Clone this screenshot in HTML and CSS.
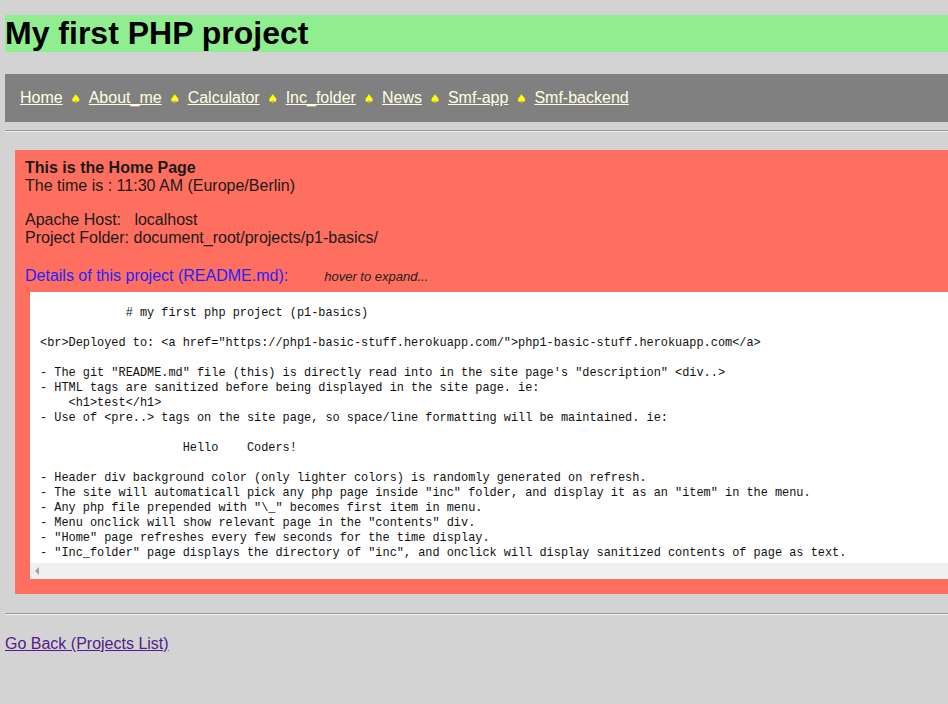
FILE: index.html
```html
<!DOCTYPE html>
<html lang="en">
<head>
<meta charset="utf-8">
<title>My first PHP project</title>
<link rel="stylesheet" href="styles.css">
</head>
<body>
<h1 class="title">My first PHP project</h1>
<nav class="menu">
  <a class="menu-link" href="#">Home</a><span class="sep">♠</span>
  <a class="menu-link" href="#">About_me</a><span class="sep">♠</span>
  <a class="menu-link" href="#">Calculator</a><span class="sep">♠</span>
  <a class="menu-link" href="#">Inc_folder</a><span class="sep">♠</span>
  <a class="menu-link" href="#">News</a><span class="sep">♠</span>
  <a class="menu-link" href="#">Smf-app</a><span class="sep">♠</span>
  <a class="menu-link" href="#">Smf-backend</a>
</nav>
<hr class="rule">
<main class="content">
  <p class="block"><b>This is the Home Page</b><br>The time is : 11:30 AM (Europe/Berlin)</p>
  <p class="block host">Apache Host:&nbsp;&nbsp; localhost<br>Project Folder: document_root/projects/p1-basics/</p>
  <p class="details"><span class="details-label">Details of this project (README.md):</span><span class="hint">hover to expand...</span></p>
  <div class="readme">
<pre class="readme-text">            # my first php project (p1-basics)

&lt;br&gt;Deployed to: &lt;a href="https://php1-basic-stuff.herokuapp.com/"&gt;php1-basic-stuff.herokuapp.com&lt;/a&gt;

- The git "README.md" file (this) is directly read into in the site page's "description" &lt;div..&gt;
- HTML tags are sanitized before being displayed in the site page. ie:
    &lt;h1&gt;test&lt;/h1&gt;
- Use of &lt;pre..&gt; tags on the site page, so space/line formatting will be maintained. ie:

                    Hello    Coders!

- Header div background color (only lighter colors) is randomly generated on refresh.
- The site will automaticall pick any php page inside "inc" folder, and display it as an "item" in the menu.
- Any php file prepended with "\_" becomes first item in menu.
- Menu onclick will show relevant page in the "contents" div.
- "Home" page refreshes every few seconds for the time display.
- "Inc_folder" page displays the directory of "inc", and onclick will display sanitized contents of page as text.</pre>
    <div class="hscroll"><span class="hscroll-arrow"></span></div>
  </div>
</main>
<hr class="rule rule-bottom">
<a class="back" href="#">Go Back (Projects List)</a>
</body>
</html>
```

FILE: styles.css
```css
html {
  background: #d3d3d3;
  overflow: hidden;
}

body {
  margin: 0 0 0 5px;
  font-family: "Liberation Sans", Arial, sans-serif;
  font-size: 16px;
  line-height: 18px;
  color: #000;
}

.title {
  margin: 15px 0 0;
  background: #90ee90;
  font-size: 32px;
  line-height: 37px;
  font-weight: bold;
}

.menu {
  margin-top: 22px;
  background: #808080;
  padding: 15px 15px 15px;
  display: flex;
  align-items: center;
  gap: 9px;
}

.menu-link {
  color: #ffffe0;
  text-decoration: underline;
}

.sep {
  display: flex;
  justify-content: center;
  width: 8px;
  color: #ffff00;
  font-family: "DejaVu Sans", sans-serif;
  font-size: 12px;
  line-height: 18px;
  position: relative;
  top: 1px;
}

.rule {
  margin: 8px 0;
  border: 0;
  border-top: 1px solid #9a9a9a;
  border-bottom: 1px solid #eeeeee;
  height: 0;
}

.content {
  margin: 18px 0 19px 10px;
  background: #ff6f60;
  padding: 9px 0 15px 10px;
  color: #1a1a1a;
}

.block {
  margin: 0 0 16px;
}

.host {
  margin-bottom: 20px;
}

.details {
  margin: 0 0 6px;
  display: flex;
  align-items: baseline;
}

.details-label {
  color: #2323ff;
}

.hint {
  margin-left: 36px;
  font-style: italic;
  font-size: 13px;
  color: #222;
}

.readme {
  margin-left: 5px;
  background: #fff;
}

.readme-text {
  margin: 0;
  padding: 14px 10px 2px;
  font-family: "Liberation Mono", "DejaVu Sans Mono", monospace;
  font-size: 11.9px;
  line-height: 15px;
  color: #111;
  white-space: pre;
  overflow: hidden;
}

.hscroll {
  height: 16px;
  background: #f0f0f0;
  display: flex;
  align-items: center;
  padding-left: 5px;
}

.hscroll-arrow {
  width: 0;
  height: 0;
  border-top: 4px solid transparent;
  border-bottom: 4px solid transparent;
  border-right: 4px solid #a3a3a3;
}

.rule-bottom {
  margin-top: 18px;
}

.back {
  display: inline-block;
  margin-top: 12px;
  color: #551a8b;
}
```
